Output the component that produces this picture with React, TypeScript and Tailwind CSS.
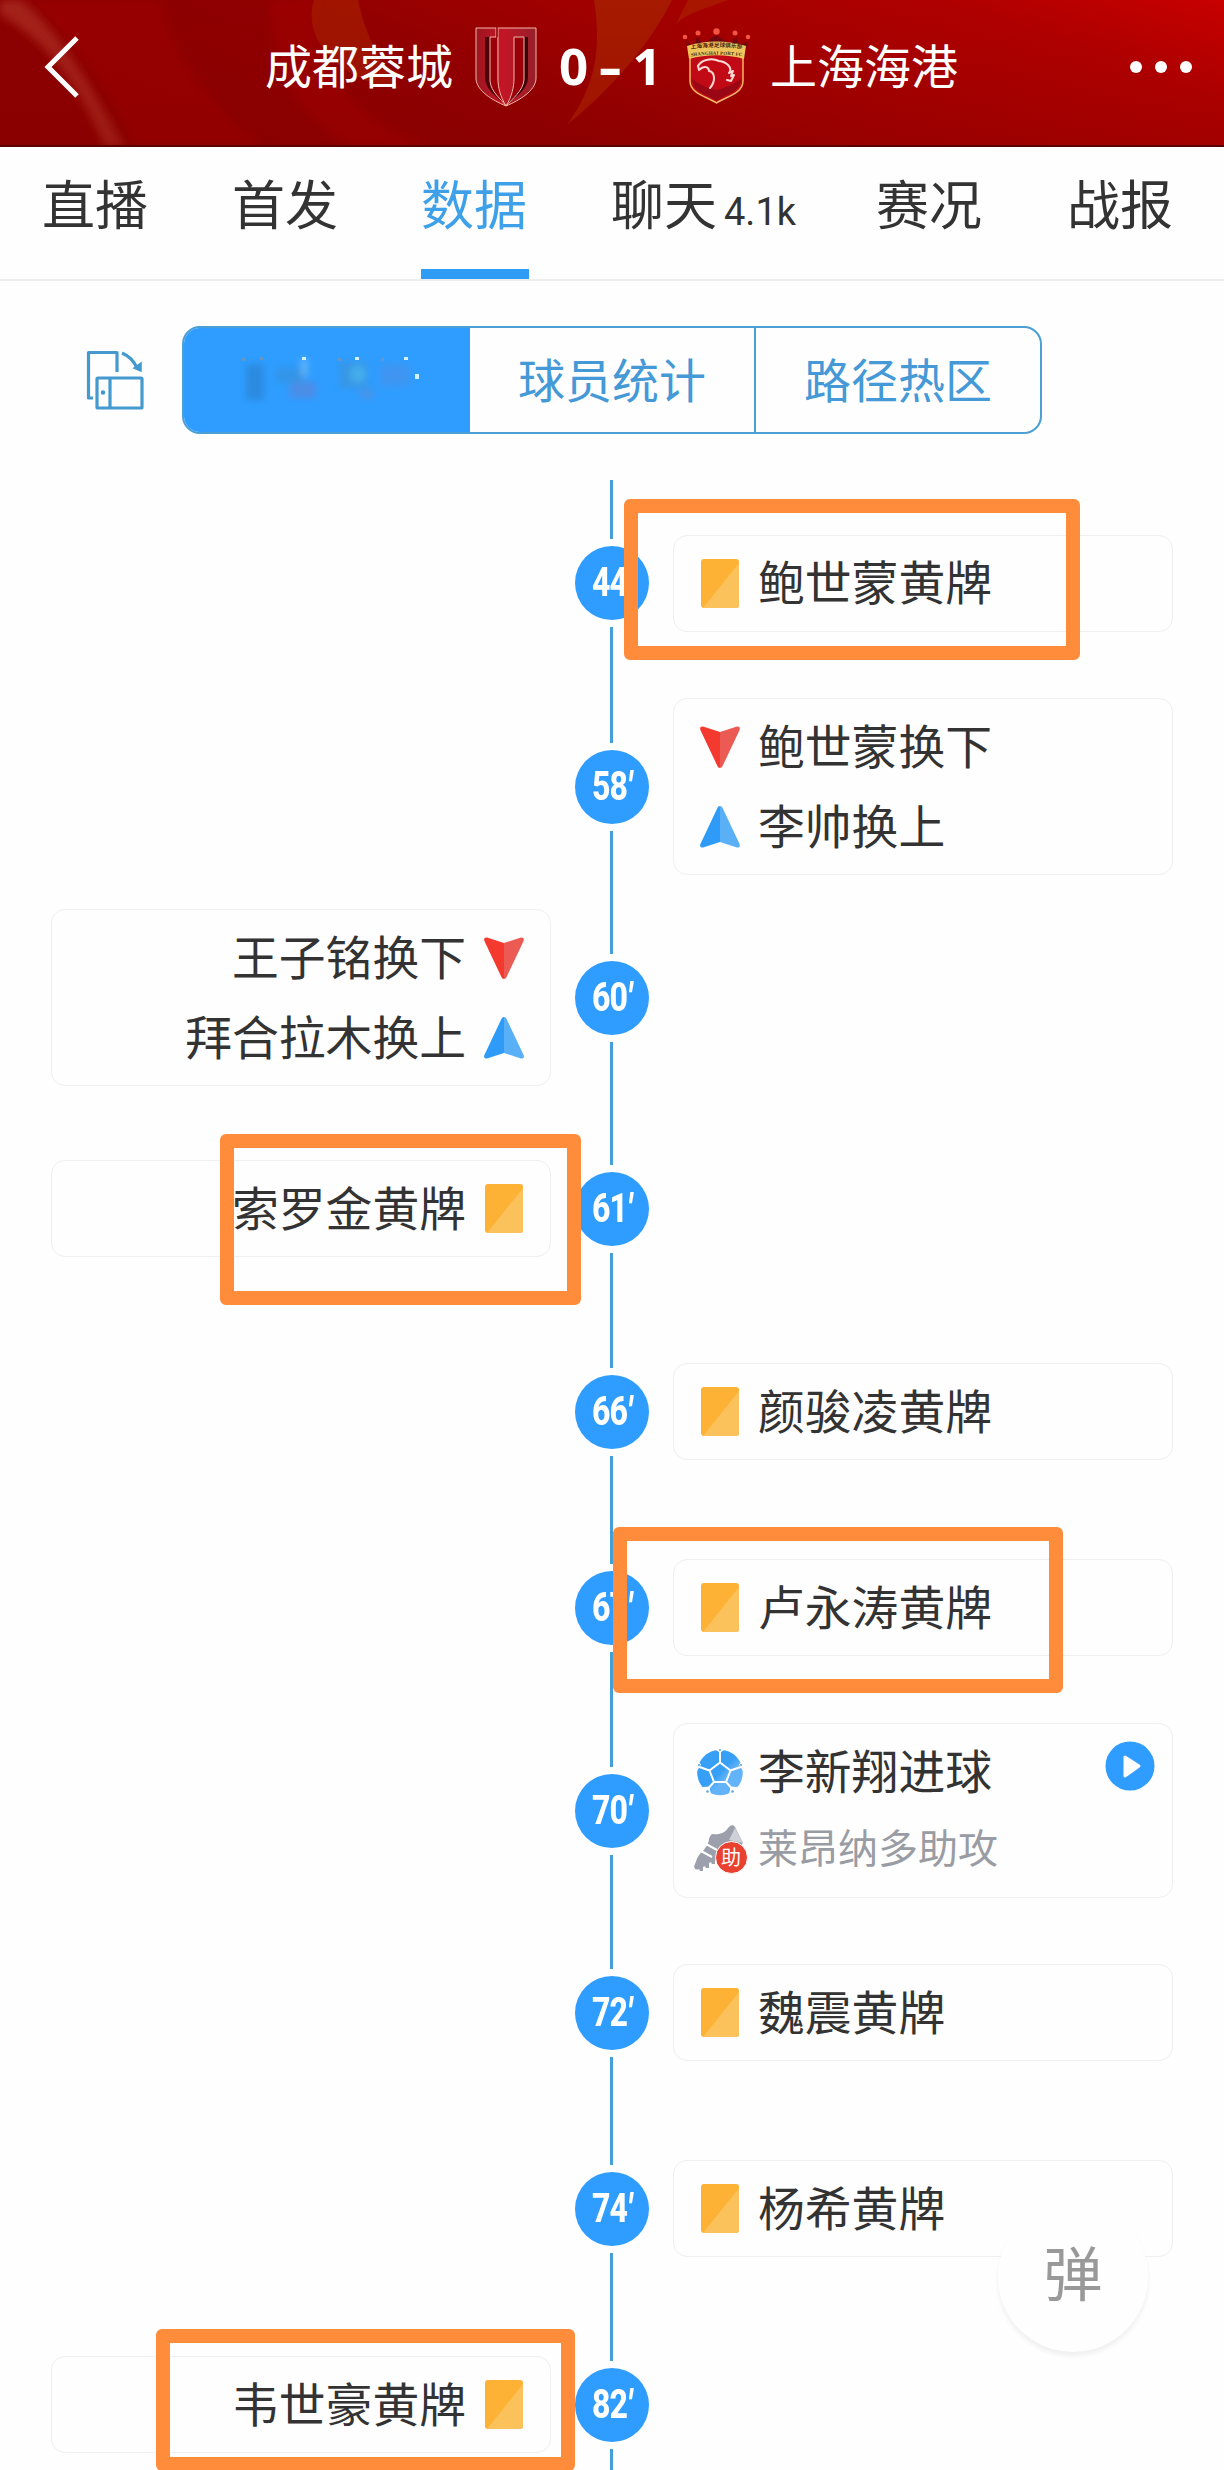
import type { ReactNode } from "react";

type Kind = "card" | "down" | "up" | "goal" | "assist";

interface MatchEvent {
  minute: string;
  side: "left" | "right";
  row: string;
  card: string;
  video?: boolean;
  lines: { kind: Kind; text: string }[];
}

const single = "h-[97px]";
const double = "h-[177px]";

const events: MatchEvent[] = [
  { minute: "44", side: "right", row: "h-[206px]", card: single, lines: [{ kind: "card", text: "鲍世蒙黄牌" }] },
  {
    minute: "58",
    side: "right",
    row: "h-[201px]",
    card: double,
    lines: [
      { kind: "down", text: "鲍世蒙换下" },
      { kind: "up", text: "李帅换上" },
    ],
  },
  {
    minute: "60",
    side: "left",
    row: "h-[221px]",
    card: double,
    lines: [
      { kind: "down", text: "王子铭换下" },
      { kind: "up", text: "拜合拉木换上" },
    ],
  },
  { minute: "61", side: "left", row: "h-[201px]", card: single, lines: [{ kind: "card", text: "索罗金黄牌" }] },
  { minute: "66", side: "right", row: "h-[205px]", card: single, lines: [{ kind: "card", text: "颜骏凌黄牌" }] },
  { minute: "67", side: "right", row: "h-[187px]", card: single, lines: [{ kind: "card", text: "卢永涛黄牌" }] },
  {
    minute: "70",
    side: "right",
    row: "h-[219px]",
    card: "h-[175px]",
    video: true,
    lines: [
      { kind: "goal", text: "李新翔进球" },
      { kind: "assist", text: "莱昂纳多助攻" },
    ],
  },
  { minute: "72", side: "right", row: "h-[185px]", card: single, lines: [{ kind: "card", text: "魏震黄牌" }] },
  { minute: "74", side: "right", row: "h-[207px]", card: single, lines: [{ kind: "card", text: "杨希黄牌" }] },
  { minute: "82", side: "left", row: "h-[185px]", card: single, lines: [{ kind: "card", text: "韦世豪黄牌" }] },
];

const YellowCard = () => (
  <svg width="38" height="49" viewBox="0 0 38 49">
    <rect width="38" height="49" rx="3" fill="#fdb235" />
    <path d="M38 4V46a3 3 0 0 1-3 3H2Z" fill="#fbc25c" />
  </svg>
);

const SubDown = () => (
  <svg width="40" height="42" viewBox="0 0 40 42">
    <path d="M3 .5 20 6V42c-1.300 0-2-.7-2.600-2L.4 4C-.5 1.500 1 0 3 .5Z" fill="#f4392f" />
    <path d="M37 .5 20 6V42c1.300 0 2-.7 2.600-2L39.600 4C40.500 1.500 39 0 37 .5Z" fill="#ec5a54" />
  </svg>
);

const SubUp = () => (
  <svg width="40" height="42" viewBox="0 0 40 42">
    <path d="M3 41.500 20 36V0c-1.300 0-2 .7-2.600 2L.4 38C-.5 40.500 1 42 3 41.500Z" fill="#2f9bf8" />
    <path d="M37 41.500 20 36V0c1.300 0 2 .7 2.600 2L39.600 38C40.500 40.500 39 42 37 41.500Z" fill="#5ab0f7" />
  </svg>
);

const Ball = () => (
  <svg width="46" height="47" viewBox="0 0 46 47">
    <defs>
      <linearGradient id="ball" x1="0" y1="0" x2="1" y2="1">
        <stop offset=".5" stopColor="#389ff7" />
        <stop offset=".62" stopColor="#62b3fa" />
      </linearGradient>
    </defs>
    <circle cx="23" cy="23.500" r="22.800" fill="url(#ball)" />
    <g fill="none" stroke="#fff" strokeWidth="2" strokeLinejoin="round">
      <path d="M23 13.500 33.500 21.500 29 33H17L12.500 21.500Z" />
      <path d="M23 13.500V1M33.500 21.500 45 17.500M12.500 21.500 1 17.500M29 33 34 38.500 34 46M17 33 12 38.500 12 46M34 38.500 40 39M12 38.500 6 39" />
    </g>
    <g fill="#fff">
      <path d="M17 0H29L23 3.500Z" />
      <path d="M0 11 4 15.500 0 22Z" />
      <path d="M46 11 42 15.500 46 22Z" />
      <path d="M4 39 12 39 15 47H4Z" />
      <path d="M42 39 34 39 31 47H42Z" />
    </g>
    <g fill="#5a9fe0">
      <circle cx="23" cy="1" r="1" />
      <circle cx="2" cy="16" r="1" />
      <circle cx="44" cy="16" r="1" />
      <circle cx="10.500" cy="42.500" r="1.200" />
      <circle cx="35.500" cy="42.500" r="1.200" />
    </g>
  </svg>
);

const Boot = () => (
  <span className="relative block h-12 w-[53px]">
    <svg width="53" height="48" viewBox="0 0 53 48">
      <path
        d="M19 9C25 10 31 8 34 3L36 1C38-.3 40 0 41 2L49 18 36 35H21L21 39 18 39 17 37 15 38 15 43 12 43 11 41 9 42 9 46 6 46 5 44C1 46-1 42 1 39 3 34 4 30 8 27 11 24 15 18 15 14 16 11 17 9 19 9Z"
        fill="#9ba0ac"
      />
      <path d="M35 15 41 3 49 18Z" fill="#cfd1d8" />
      <path d="M12 19 23 25M7 26 18 32" stroke="#fff" strokeWidth="2" />
    </svg>
    <span className="absolute left-[21px] top-4 flex size-[33px] items-center justify-center rounded-full border-[1.500px] border-white bg-[#e8412f] pb-[2px] text-[20px] leading-none text-white">
      助
    </span>
  </span>
);

const icons: Record<Kind, ReactNode> = {
  card: <YellowCard />,
  down: <SubDown />,
  up: <SubUp />,
  goal: <Ball />,
  assist: <Boot />,
};

const ChengduLogo = () => (
  <svg width="62" height="80" viewBox="0 0 62 80">
    <defs>
      <linearGradient id="cd" x1="0" x2="1">
        <stop offset="0" stopColor="#9c1620" />
        <stop offset=".45" stopColor="#c41526" />
        <stop offset="1" stopColor="#94202a" />
      </linearGradient>
    </defs>
    <path d="M1 1H61V52C60 64 45 73 31 79 17 73 2 64 1 52Z" fill="url(#cd)" stroke="#f2b7a6" />
    <path d="M10 10H15V52C16 64 25 71 31 78 20 69 10 62 10 50Z" fill="#4e0209" />
    <path d="M15 10H22V52C23 62 26 70 31 78 22 71 16 64 15 52Z" fill="#9c0008" />
    <path d="M49 10H53V50C53 62 42 69 31 78 39 69 48 62 49 52Z" fill="#3e0208" />
    <path d="M39 10H49V52C47 64 37 71 31 78 36 68 39 61 39 52Z" fill="#9a0009" />
    <path d="M21 1V10H15V54C16 65 26 72 31 79 25 69 23 60 23 52V1" fill="none" stroke="#f2b7a6" />
    <path d="M31 79C37 69 39 60 39 51V10H49V53C48 64 37 72 31 79" fill="none" stroke="#f2b7a6" />
    <path d="M22 0V10" stroke="#8b0509" strokeWidth="1.500" />
  </svg>
);

const ShanghaiLogo = () => (
  <svg width="70" height="78" viewBox="0 0 70 78">
    <path d="M4 13 11 18 15 9 21 16 34 7 48 16 54 9 58 18 66 13 62 30H8Z" fill="#6f0710" />
    <g fill="#f25542">
      <circle cx="3" cy="9" r="2.300" />
      <circle cx="16" cy="5" r="2.500" />
      <circle cx="34.500" cy="3.500" r="3.200" />
      <circle cx="53" cy="5" r="2.500" />
      <circle cx="66" cy="9" r="2.300" />
    </g>
    <path
      d="M8 28C24 23 45 23 61 28V53C61 66 43 69 34.500 75 26 69 8 66 8 53Z"
      fill="#c20a16"
      stroke="#f0b765"
      strokeWidth="1.500"
    />
    <path d="M10 51C15 54 20 59 34 62 48 59 54 54 59 51 59 64 43 67 34.500 73 26 67 10 64 10 51Z" fill="#980713" />
    <path d="M5 18C22 12 47 12 64 18L62 31C45 26 24 26 7 31Z" fill="#efc45d" />
    <path id="crest-top" d="M9 21C24 18.500 46 18.500 61 21" fill="none" />
    <path id="crest-bottom" d="M9 28.500C24 26 46 26 61 28.500" fill="none" />
    <text fontSize="5.700" fontWeight="700" fill="#4a2a10">
      <textPath href="#crest-top">上海海港足球俱乐部</textPath>
    </text>
    <text fontSize="4.800" fontWeight="700" fill="#4a2a10" fontFamily="Liberation Serif" textLength="51">
      <textPath href="#crest-bottom">SHANGHAI PORT FC</textPath>
    </text>
    <g fill="none" stroke="#ffd9d4" strokeWidth="2" strokeLinecap="round" strokeLinejoin="round">
      <path d="M16 38C20 31 30 30 37 33 45 34 51 40 47 45L51 43 49 48 52 47 49 53 45 52" />
      <path d="M16 38 17 42C22 37 27 39 27 43 33 44 34 53 28 60" />
    </g>
  </svg>
);

const RotateIcon = () => (
  <svg width="58" height="60" viewBox="0 0 58 60" fill="none" stroke="#4499cf" strokeWidth="3.200">
    <path d="M7 48H2.500V2.500H31V22" strokeLinejoin="round" />
    <rect x="11" y="28" width="45" height="30" rx="1" />
    <path d="M24 28V58" />
    <circle cx="17" cy="42.500" r="1.500" fill="#4499cf" strokeWidth="1.500" />
    <path d="M36 3C43 6 48 11 51 18" />
    <path d="M55 13V21L48 18Z" fill="#4499cf" strokeWidth="1.500" />
  </svg>
);

const HeaderArt = () => (
  <svg className="absolute inset-0 h-full w-full" viewBox="0 0 1224 147" preserveAspectRatio="none">
    <defs>
      <linearGradient id="hd" x1="0" y1=".3" x2="1" y2="0">
        <stop offset="0" stopColor="#8a0000" />
        <stop offset=".25" stopColor="#8e0001" />
        <stop offset=".5" stopColor="#a00000" />
        <stop offset=".8" stopColor="#b00000" />
        <stop offset="1" stopColor="#c80000" />
      </linearGradient>
      <linearGradient id="shade" x1="0" y1="0" x2="0" y2="1">
        <stop offset="0" stopColor="#900" stopOpacity="0" />
        <stop offset="1" stopColor="#800" stopOpacity=".25" />
      </linearGradient>
      <filter id="soft">
        <feGaussianBlur stdDeviation="4" />
      </filter>
    </defs>
    <rect width="1224" height="147" fill="url(#hd)" />
    <g filter="url(#soft)">
      <path d="M0 15C45 40 75 80 105 147H125C90 85 70 45 22 0H0Z" fill="#ab2b20" opacity=".75" />
      <path d="M30 0C90 60 120 110 135 147H265C210 110 170 50 160 0Z" fill="#a00503" opacity=".5" />
      <path d="M270 0H315C310 60 350 120 430 147H350C290 110 270 60 270 0Z" fill="#a50000" opacity=".5" />
    </g>
    <path d="M314 0H358C364 30 378 60 398 88C350 84 300 45 314 0Z" fill="#a51c00" opacity=".7" />
    <path d="M594 0H672C650 45 610 90 567 125C600 80 600 40 594 0Z" fill="#a51a00" />
    <path d="M676 24C688 12 708 8 728 0H688Z" fill="#a91600" />
    <rect width="1224" height="147" fill="url(#shade)" />
    <path d="M0 146H1224" stroke="#5a0000" strokeWidth="2" />
  </svg>
);

const Header = () => (
  <div className="relative flex h-[147px] w-full shrink-0 text-white">
    <HeaderArt />
    <div className="relative flex h-[133px] w-full items-center pl-[44px]">
      <svg width="36" height="64" viewBox="0 0 36 64" fill="none" stroke="#fff" strokeWidth="5">
        <path d="M33 3 4 32 33 61" />
      </svg>
      <div className="ml-[185px] w-[210px] pb-[6px] text-[47px] leading-none">成都蓉城</div>
      <ChengduLogo />
      <div className="ml-[22px] flex w-[123px] gap-[14px] pb-[3px] font-['Noto_Sans'] text-[51px] font-bold leading-none">
        <span>0</span>
        <span className="scale-x-[1.4]">-</span>
        <span>1</span>
      </div>
      <ShanghaiLogo />
      <div className="ml-[18px] pb-[6px] text-[47px] leading-none">上海海港</div>
      <div className="ml-auto mr-8 flex gap-[13px]">
        <span className="size-3 rounded-full bg-white" />
        <span className="size-3 rounded-full bg-white" />
        <span className="size-3 rounded-full bg-white" />
      </div>
    </div>
  </div>
);

const Tabs = () => (
  <div className="flex h-[134px] w-full shrink-0 items-start border-b-2 border-[#eee] pl-[42px] text-[53px] leading-none text-[#333]">
    <div className="w-[190px] pt-[29px]">直播</div>
    <div className="w-[189px] pt-[29px]">首发</div>
    <div className="mr-[82px] h-[132px] w-[108px] border-b-[10px] border-[#2f9df5] pt-[29px] text-[#3fa0ea]">
      数据
    </div>
    <div className="flex w-[265px] items-baseline pt-[29px]">
      聊天
      <span className="ml-[7px] font-['Roboto'] text-[38px] leading-none">4.1k</span>
    </div>
    <div className="w-[191px] pt-[29px]">赛况</div>
    <div className="pt-[29px]">战报</div>
  </div>
);

const SubTabs = () => (
  <div className="flex h-[108px] items-center pl-[86px]">
    <RotateIcon />
    <div className="ml-[38px] flex h-[108px] w-[860px] overflow-hidden rounded-[18px] border-2 border-[#4a9fd4] text-[47px] leading-none text-[#4499d6]">
      <div className="flex w-[286px] items-center justify-center bg-[#2e9dff]">
        <svg width="190" height="56" viewBox="0 0 190 56">
          <filter id="smudge">
            <feGaussianBlur stdDeviation="3.500" />
          </filter>
          <g filter="url(#smudge)" opacity=".7">
            <path d="M14 12H32V48H14Z" fill="#2a83d2" />
            <path d="M44 16H72V30H44Z" fill="#3691dc" />
            <path d="M58 30H84V46H58Z" fill="#5a86da" />
            <path d="M70 6H75V24H70Z" fill="#8cc8f5" />
            <path d="M108 10H136V36H108Z" fill="#3d93d8" />
            <ellipse cx="126" cy="22" rx="8" ry="9" fill="#4fb6e6" />
            <path d="M148 12H178V34H148Z" fill="#4693ea" />
            <path d="M128 38H142V46H128Z" fill="#5a8fd8" />
          </g>
          <g fill="#d5f2fa">
            <rect x="70" y="5" width="4" height="3" />
            <rect x="123" y="5" width="4" height="3" />
            <rect x="172" y="5" width="4" height="3" />
            <rect x="183" y="22" width="4" height="5" />
          </g>
          <g fill="#6697c4">
            <rect x="10" y="6" width="3" height="3" />
            <rect x="28" y="5" width="3" height="3" />
            <rect x="106" y="6" width="3" height="3" />
            <rect x="149" y="6" width="3" height="3" />
          </g>
        </svg>
      </div>
      <div className="flex w-[286px] items-center justify-center border-r-2 border-[#4a9fd4] pb-[5px]">球员统计</div>
      <div className="flex flex-1 items-center justify-center pb-[5px]">路径热区</div>
    </div>
  </div>
);

const EventCard = ({ event }: { event: MatchEvent }) => {
  const left = event.side === "left";
  return (
    <div
      className={`relative flex w-[500px] flex-col justify-center rounded-[14px] border border-[#efefef] px-5 ${event.card}`}
    >
      {event.lines.map((line) => (
        <div
          key={line.text}
          className={`flex items-center gap-3 ${left ? "flex-row-reverse" : ""} ${event.video ? "h-[77px]" : "h-20"}`}
        >
          <span className="flex w-[52px] shrink-0 justify-center">{icons[line.kind]}</span>
          {line.kind === "assist" ? (
            <span className="pb-[7px] text-[40px] leading-none text-[#999ca3]">{line.text}</span>
          ) : (
            <span className="pb-[5px] text-[46.800px] leading-none text-[#333]">{line.text}</span>
          )}
        </div>
      ))}
      {event.video && (
        <svg className="absolute right-[17px] top-[17px]" width="50" height="50" viewBox="0 0 50 50">
          <circle cx="25" cy="25" r="24.500" fill="#2e9dff" />
          <path d="M20 16 34 25 20 35Z" fill="#fff" stroke="#fff" strokeWidth="3" strokeLinejoin="round" />
        </svg>
      )}
    </div>
  );
};

const EventRow = ({ event }: { event: MatchEvent }) => (
  <div className={`flex w-full shrink-0 items-center pl-[51px] ${event.row}`}>
    <div className="w-[524px]">{event.side === "left" && <EventCard event={event} />}</div>
    <div className="flex h-full w-[74px] flex-col items-center gap-[7px]">
      <div className="mr-px w-[3px] flex-1 bg-[#449fd6]" />
      <div className="flex size-[74px] items-center justify-center rounded-full bg-[#2e9dff]">
        <span className="scale-x-[.8] whitespace-nowrap font-['Roboto'] text-[40px] font-extrabold leading-none tracking-[-1px] text-white">
          {event.minute}
          <i>′</i>
        </span>
      </div>
      <div className="mr-px w-[3px] flex-1 bg-[#449fd6]" />
    </div>
    <div className="ml-6">{event.side === "right" && <EventCard event={event} />}</div>
  </div>
);

// highlight boxes over the timeline
const marks = [
  "left-[624px] top-[499px] h-[161px] w-[456px]",
  "left-[220px] top-[1134px] h-[171px] w-[361px]",
  "left-[613px] top-[1527px] h-[166px] w-[450px]",
  "left-[156px] top-[2329px] h-[142px] w-[419px]",
];

const App = () => {
  return (
    <div className="relative flex h-[2470px] w-[1224px] flex-col overflow-hidden bg-[#fefefe] font-['Noto_Sans_CJK_SC',sans-serif]">
      <Header />
      <Tabs />
      <div className="shrink-0 pt-[45px]">
        <SubTabs />
      </div>
      <div className="mt-[46px] flex shrink-0 flex-col">
        {events.map((event) => (
          <EventRow key={event.minute} event={event} />
        ))}
      </div>

      <div className="absolute left-[998px] top-[2202px] flex size-[150px] items-center justify-center rounded-full bg-[#fefefe] pb-[14px] text-[59px] leading-none text-[#999] shadow-[0_4px_5px_rgba(0,0,0,0.06)]">
        弹
      </div>

      {marks.map((mark) => (
        <div key={mark} className={`absolute rounded-md border-[14px] border-[#ff8c3a] ${mark}`} />
      ))}
    </div>
  );
};

export default App;
